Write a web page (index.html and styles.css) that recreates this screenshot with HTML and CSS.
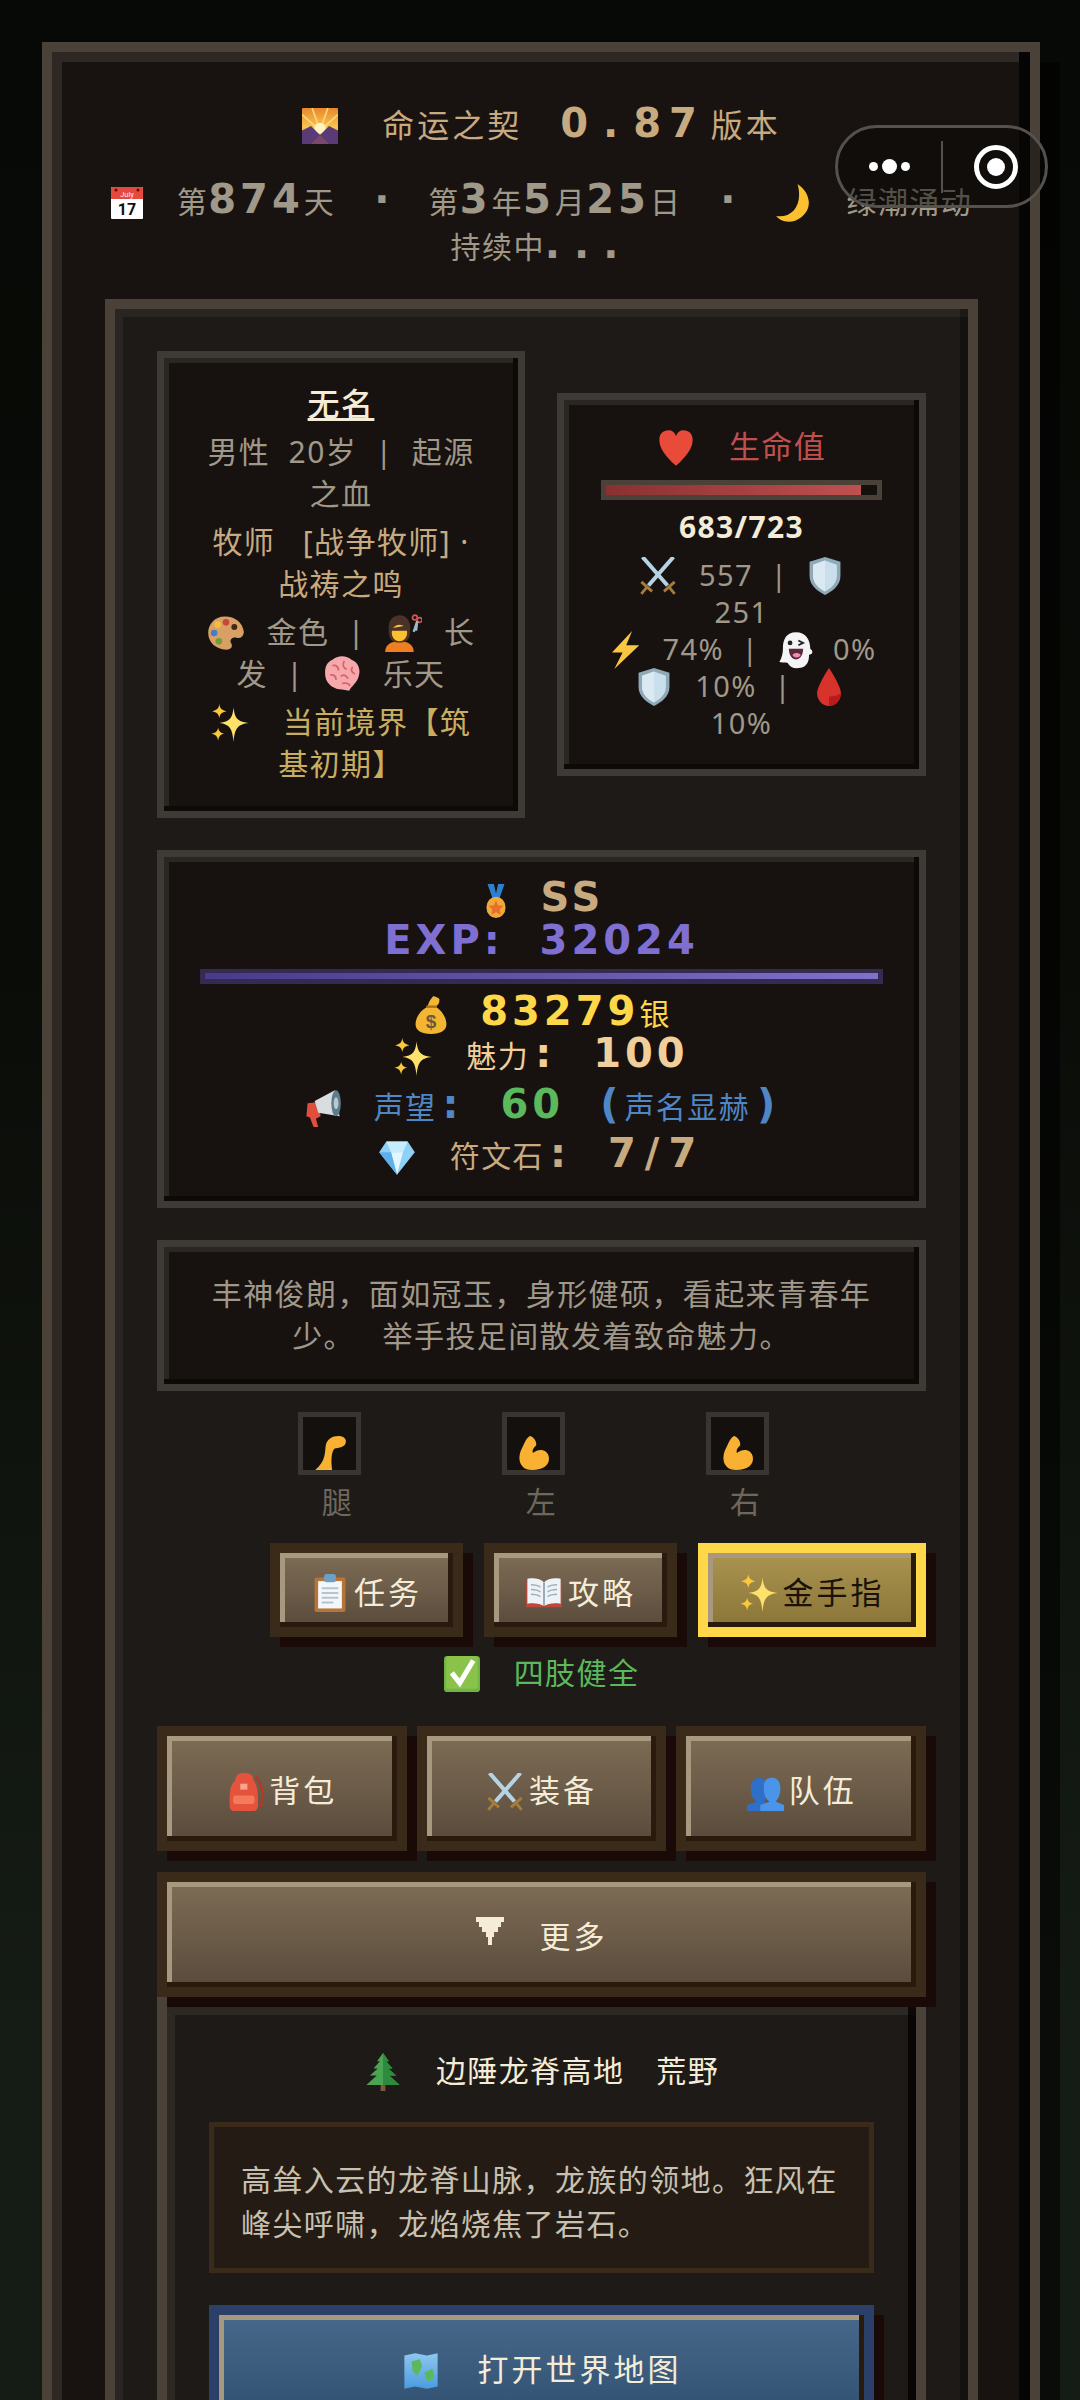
FILE: index.html
```html
<!DOCTYPE html>
<html>
<head>
    <title>命运之契</title>
    <link rel="stylesheet" href="styles.css">
</head>

<body>
<svg class="sprites" xmlns="http://www.w3.org/2000/svg">
    <defs>
        <linearGradient id="skyGrad" x1="0" y1="0" x2="0" y2="1"><stop offset="0" stop-color="#e8862c"/><stop offset=".55" stop-color="#f9c74f"/><stop offset="1" stop-color="#8a4a7a"/></linearGradient>
        <linearGradient id="mapGrad" x1="0" y1="0" x2="0" y2="1"><stop offset="0" stop-color="#8fc7ee"/><stop offset="1" stop-color="#4a9be0"/></linearGradient>
    </defs>
    <symbol id="i-sunrise" viewBox="0 0 32 32"><rect width="32" height="32" rx="1" fill="url(#skyGrad)"/><path d="M16 20L9 0M16 20L23 0M16 20L0 6M16 20L32 6" stroke="#fbd67a" stroke-width="1.5"/><circle cx="16" cy="18" r="5" fill="#fff3c4"/><path d="M0 32V20L8 16L16 24L24 16L32 20V32Z" fill="#5b3a78"/><path d="M8 32L16 24L24 32Z" fill="#7a4a6a"/></symbol>
    <symbol id="i-moon" viewBox="0 0 32 32"><path d="M19 0C31 8 33 24 17 31C10 33 4 31 1 27C14 29 24 18 19 0Z" fill="#fbc02d"/></symbol>
    <symbol id="i-heart" viewBox="0 0 32 32"><path d="M16 31C5 21 2 15 2 9C2 4 5 1 10 1C13 1 15 3 16 6C17 3 19 1 22 1C27 1 30 4 30 9C30 15 27 21 16 31Z" fill="#e84b3a"/></symbol>
    <symbol id="i-swords" viewBox="0 0 32 32"><path d="M29 0L8 24M3 0L24 24" stroke="#b4d4e6" stroke-width="3.4"/><path d="M2 21L11 29M30 21L21 29M7 25L2 31M25 25L30 31" stroke="#a67c3a" stroke-width="2.4"/></symbol>
    <symbol id="i-shield" viewBox="0 0 32 32"><path d="M16 0L29 4V16C29 24 22 29 16 32C10 29 3 24 3 16V4Z" fill="#90a9b7"/><path d="M16 3L26 6.500V16C26 22 21 26.500 16 29C11 26.500 6 22 6 16V6.500Z" fill="#c9e0ec"/><path d="M16 3V29C11 26.500 6 22 6 16V6.500Z" fill="#dbeaf2"/></symbol>
    <symbol id="i-bolt" viewBox="0 0 32 32"><path d="M22 0L5 18H14L7 32L28 12H17Z" fill="#fbc640"/></symbol>
    <symbol id="i-ghost" viewBox="0 0 32 32"><path d="M16 1C8 1 5 7 5 14C5 21 3 24 2 26C6 27 7 26 9 27C11 31 15 32 20 31C25 30 27 26 27 20C30 20 31 17 28 15C28 7 24 1 16 1Z" fill="#f4f4f6"/><circle cx="11" cy="10" r="2" fill="#222"/><path d="M18 8L22 10L18 12" stroke="#222" fill="none" stroke-width="1.5"/><path d="M10 15H22C22 22 18 24 16 24C13 24 10 21 10 15Z" fill="#5a2a3a"/><path d="M13 20C15 18 18 18 20 20C19 23 14 23 13 20Z" fill="#ef8fa8"/></symbol>
    <symbol id="i-drop" viewBox="0 0 32 32"><path d="M16 0C16 0 6 15 6 21A10 11 0 0 0 26 21C26 15 16 0 16 0Z" fill="#d8322c"/><path d="M16 24V32A10 11 0 0 0 26 21C24 23 20 24 16 24Z" fill="#b71c1c"/></symbol>
    <symbol id="i-palette" viewBox="0 0 32 32"><path d="M15 2C6 2 1 9 1 16C1 24 8 30 16 30C21 30 22 27 20 24C19 21 22 19 25 20C29 21 31 18 31 15C30 7 24 2 15 2Z" fill="#d9a066"/><circle cx="9" cy="9" r="2.800" fill="#f2c037"/><circle cx="16" cy="7" r="2.800" fill="#c9463d"/><circle cx="6" cy="16" r="2.800" fill="#3f7fc9"/><circle cx="10" cy="23" r="2.800" fill="#6b9e3f"/><circle cx="23" cy="11" r="2.500" fill="#3f2a1a"/></symbol>
    <symbol id="i-haircut" viewBox="0 0 32 32"><path d="M1 32C1 25 7 23 13 23C19 23 25 25 25 32Z" fill="#ef7d22"/><path d="M4 14C3 5 8 1 13 1C19 1 23 6 22 14C22 20 20 24 13 24C6 24 4 20 4 14Z" fill="#4a3228"/><ellipse cx="13" cy="16" rx="6.500" ry="7" fill="#fbc02d"/><path d="M7 12C10 11 15 11 19 9L20 14L6 14Z" fill="#4a3228"/><circle cx="26" cy="3" r="2" fill="none" stroke="#d9534f" stroke-width="1.400"/><circle cx="30" cy="5" r="2" fill="none" stroke="#d9534f" stroke-width="1.400"/><path d="M25 15L28 6L27 14" stroke="#9fb8c6" stroke-width="2" fill="none"/></symbol>
    <symbol id="i-brain" viewBox="0 0 32 32"><path d="M8 4C12 0 20 0 24 4C30 6 32 13 30 18C29 23 24 26 22 30L16 29C10 29 3 25 2 18C1 11 3 6 8 4Z" fill="#f6a9ad"/><path d="M8 9C11 8 13 10 13 13M18 5C16 8 17 11 20 12M25 10C23 12 24 15 27 16M6 17C9 16 11 18 11 21M15 18C17 16 20 17 21 20M16 24C19 23 22 24 23 26" stroke="#d9626c" stroke-width="1.500" fill="none"/></symbol>
    <symbol id="i-spark" viewBox="0 0 32 32"><path d="M19 3C20 12 22 15 32 16C22 17 20 21 19 32C18 21 16 17 7 16C16 15 18 12 19 3Z" fill="#fde16b"/><path d="M7 0C7.500 4 9 5 13 6C9 7 7.500 8 7 12C6.500 8 5 7 1 6C5 5 6.500 4 7 0Z" fill="#fbc83c"/><path d="M6 20C6.500 23 8 24.500 11 25C8 25.500 6.500 27 6 31C5.500 27 4 25.500 0 25C4 24.500 5.500 23 6 20Z" fill="#fbc83c"/></symbol>
    <symbol id="i-medal" viewBox="0 0 32 32"><path d="M8 0H14L16 9L18 0H24L19 14H13Z" fill="#2f7fd0"/><ellipse cx="16" cy="22" rx="9" ry="10" fill="#f2a93b"/><path d="M16 15L18 20L23 20.500L19.500 24L20.500 29L16 26.500L11.500 29L12.500 24L9 20.500L14 20Z" fill="#e8712c"/></symbol>
    <symbol id="i-horn" viewBox="0 0 32 32"><path d="M3 12L12 11L14 23L10 25L12 32H8L5 24L2 23Z" fill="#e04f3c"/><path d="M9 10L26 1L30 23L12 20Z" fill="#d8dde0"/><ellipse cx="27" cy="12" rx="4" ry="11" fill="#5d7b8a"/><ellipse cx="27" cy="12" rx="2" ry="5" fill="#b8c9d2"/></symbol>
    <symbol id="i-gem" viewBox="0 0 32 32"><path d="M7 3H25L31 12L16 31L1 12Z" fill="#8fd0f7"/><path d="M7 3L11 12H21L25 3Z" fill="#c8ecff"/><path d="M11 12L16 31L21 12Z" fill="#e4f6ff"/><path d="M1 12L11 12L16 31Z" fill="#5fb0ea"/></symbol>
    <symbol id="i-leg" viewBox="0 0 32 32"><path d="M24 0C18 0 13 3 12 9C11 16 12 24 2 32H18C17 24 17 16 20 12C24 11 31 11 31 5C31 2 28 0 24 0Z" fill="#f8b133"/></symbol>
    <symbol id="i-arm" viewBox="0 0 32 32"><path d="M12 0C8 3 7 7 4 13C0 22 3 32 14 32C25 32 31 27 30 20C29 13 21 11 15 16C14 13 16 11 18 9C19 5 15 0 12 0Z" fill="#f8b133"/></symbol>
    <symbol id="i-clip" viewBox="0 0 32 32"><rect x="3" y="3" width="26" height="29" rx="1.500" fill="#b5743a"/><rect x="6" y="6" width="20" height="23" fill="#f4f7fa"/><rect x="11" y="0" width="10" height="7" rx="2" fill="#6f9ec4"/><path d="M9 12H23M9 16H23M9 20H23M9 24H19" stroke="#b6c4ce" stroke-width="1.500"/></symbol>
    <symbol id="i-book" viewBox="0 0 32 32"><path d="M1 6H31V28H1Z" fill="#c0453a"/><path d="M2 4C8 3 13 4 16 7C19 4 24 3 30 4V25C24 24 19 25 16 27C13 25 8 24 2 25Z" fill="#eef2f6"/><path d="M16 7V27" stroke="#8fa3b2" stroke-width="1.500"/><path d="M5 9C8 9 11 9.500 13 11M5 13C8 13 11 13.500 13 15M5 17C8 17 11 17.500 13 19M27 9C24 9 21 9.500 19 11M27 13C24 13 21 13.500 19 15M27 17C24 17 21 17.500 19 19" stroke="#9fb0bd" stroke-width="1.200" fill="none"/></symbol>
    <symbol id="i-check" viewBox="0 0 32 32"><rect width="32" height="32" rx="3" fill="#6fb544"/><rect x="2" y="0" width="28" height="29" rx="2" fill="#8bc34a"/><path d="M7 15L14 24L26 4" stroke="#fff" stroke-width="4.500" fill="none"/></symbol>
    <symbol id="i-pack" viewBox="0 0 32 32"><path d="M8 6C8 1 12 0 15 0C19 0 23 1 23 6C26 9 27 14 27 26C27 30 26 32 23 32H7C4 32 3 30 3 26C3 14 4 9 8 6Z" fill="#e5533d"/><rect x="12" y="9" width="6" height="5" fill="#f9a58a"/><rect x="6" y="19" width="18" height="7" rx="2" fill="#f47a5e"/><path d="M25 3C31 9 32 20 29 29" stroke="#b5382a" stroke-width="2" fill="none"/></symbol>
    <symbol id="i-team" viewBox="0 0 32 32"><path d="M1 32V27L9 24C5 22 4 17 4 12C4 6 9 4 11 4C15 4 18 8 18 14C18 19 16 23 15 24L20 27V32Z" fill="#2f6fc8"/><path d="M12 32V27L20 24C16 22 15 17 15 12C15 6 18 4 22 4C26 4 29 7 29 13C29 18 27 22 25 24L32 27V32Z" fill="#4a94ea"/></symbol>
    <symbol id="i-tree" viewBox="0 0 32 32"><rect x="14" y="27" width="4" height="5" fill="#7a5a40"/><path d="M16 0L21 7H11ZM16 4L24 13H8ZM16 9L27 19H5ZM16 14L30 27H2Z" fill="#4aa552"/><path d="M16 0L21 7H16ZM16 4L24 13H16ZM16 9L27 19H16ZM16 14L30 27H16Z" fill="#2e8a3c"/></symbol>
    <symbol id="i-map" viewBox="0 0 32 32"><path d="M2 3L11 1L21 3L30 1V29L21 31L11 29L2 31Z" fill="url(#mapGrad)"/><path d="M8 8L15 6L17 12L13 20L9 16ZM19 17L26 14L27 22L21 25Z" fill="#5cb85c"/></symbol>
    <symbol id="i-more" viewBox="0 0 28 28"><path d="M0 0H28V5H25V10H22V15H18V20H16V28H12V20H10V15H6V10H3V5H0Z" fill="#f5ecd8"/></symbol>
</svg>

<div class="outer frame">
    <header class="top">
        <div class="title"><svg class="ico"><use href="#i-sunrise"/></svg>命运之契<span class="px ver">0<span class="dot">.</span>87</span>版本</div>
        <div class="date">
            <svg class="ico cal" viewBox="0 0 32 32"><rect width="32" height="32" rx="1" fill="#fff"/><path d="M0 1a1 1 0 0 1 1-1h30a1 1 0 0 1 1 1v11H0Z" fill="#e5483c"/><circle cx="5" cy="3" r="1.5" fill="#5a0f0a"/><circle cx="27" cy="3" r="1.5" fill="#5a0f0a"/><text x="16" y="9.500" font-size="7.500" font-family="Roboto" letter-spacing="0" fill="#ffe9e0" text-anchor="middle">July</text><text x="16" y="28" font-size="16" font-weight="700" font-family="Roboto" letter-spacing="0" fill="#111" text-anchor="middle">17</text></svg>第<span class="px">874</span>天<span class="px sep">·</span>第<span class="px">3</span>年<span class="px">5</span>月<span class="px">25</span>日<span class="px sep">·</span><svg class="ico moon"><use href="#i-moon"/></svg>绿潮涌动<br>持续中<span class="px dots">...</span>
        </div>
    </header>

    <main class="inner frame">
        <div class="top-row">
            <section class="card card-who">
                <div class="name"><u>无名</u></div>
                <p class="grey">男性&nbsp; 20岁 &nbsp;|&nbsp; 起源<br>之血</p>
                <p class="tan">牧师 &nbsp;&nbsp;[战争牧师] ·<br>战祷之鸣</p>
                <p class="grey"><svg class="ico"><use href="#i-palette"/></svg>金色 &nbsp;|&nbsp; <svg class="ico"><use href="#i-haircut"/></svg>长<br>发 &nbsp;|&nbsp; <svg class="ico"><use href="#i-brain"/></svg>乐天</p>
                <p class="gold"><svg class="ico"><use href="#i-spark"/></svg>当前境界【筑<br>基初期】</p>
            </section>
            <section class="card card-hp">
                <div class="hp-title"><svg class="ico"><use href="#i-heart"/></svg>生命值</div>
                <div class="hp-bar"><div class="hp-fill" style="width: 94%"></div></div>
                <div class="hp-val">683/723</div>
                <div class="hp-stats">
                    <svg class="ico"><use href="#i-swords"/></svg>557 &nbsp;|&nbsp; <svg class="ico ico-end"><use href="#i-shield"/></svg><br>251<br>
                    <svg class="ico ico-sm"><use href="#i-bolt"/></svg>74% &nbsp;|&nbsp; <svg class="ico ico-sm"><use href="#i-ghost"/></svg>0%<br>
                    <svg class="ico"><use href="#i-shield"/></svg>10% &nbsp;|&nbsp; <svg class="ico ico-end"><use href="#i-drop"/></svg><br>10%
                </div>
            </section>
        </div>

        <section class="card card-exp">
            <div class="rank"><svg class="ico"><use href="#i-medal"/></svg><span class="px">SS</span></div>
            <div class="exp px">EXP: 32024</div>
            <div class="exp-bar"><div class="exp-fill" style="width: 100%"></div></div>
            <div class="row money"><svg class="ico" viewBox="0 0 32 32"><path d="M18 0C21 1 24 2 23 4C23 7 21 8 20 9C25 12 29 18 29 24C29 29 24 32 16 32C8 32 3 29 3 24C3 18 7 12 13 9C14 6 15 3 18 0Z" fill="#f2b632"/><path d="M12 9L21 9" stroke="#a8701c" stroke-width="2"/><text x="16" y="27" font-size="16" font-weight="700" font-family="Liberation Sans" letter-spacing="0" fill="#6b5a3a" text-anchor="middle">$</text></svg><span class="px">83279</span>银</div>
            <div class="row charm"><svg class="ico"><use href="#i-spark"/></svg>魅力<span class="px colon">:</span><span class="px">100</span></div>
            <div class="row fame"><svg class="ico"><use href="#i-horn"/></svg>声望<span class="px colon">:</span><span class="px fame-num">60</span><span class="px paren">(</span>声名显赫<span class="px paren-end">)</span></div>
            <div class="row rune"><svg class="ico"><use href="#i-gem"/></svg>符文石<span class="px colon">:</span><span class="px rune-num">7/7</span></div>
        </section>

        <section class="card card-desc">丰神俊朗，面如冠玉，身形健硕，看起来青春年<br>少。 &nbsp; 举手投足间散发着致命魅力。</section>

        <div class="limbs">
            <div class="limb"><div class="slot"><svg><use href="#i-leg"/></svg></div><div class="limb-name">腿</div></div>
            <div class="limb"><div class="slot"><svg><use href="#i-arm"/></svg></div><div class="limb-name">左</div></div>
            <div class="limb"><div class="slot"><svg><use href="#i-arm"/></svg></div><div class="limb-name">右</div></div>
        </div>

        <div class="tool-row">
            <button class="btn tool"><svg class="ico-btn"><use href="#i-clip"/></svg>任务</button>
            <button class="btn tool"><svg class="ico-btn"><use href="#i-book"/></svg>攻略</button>
            <button class="btn tool tool-gold"><svg class="ico-btn"><use href="#i-spark"/></svg>金手指</button>
        </div>

        <div class="status"><svg class="ico"><use href="#i-check"/></svg>四肢健全</div>

        <div class="nav-row">
            <button class="btn nav"><svg class="ico-btn"><use href="#i-pack"/></svg>背包</button>
            <button class="btn nav"><svg class="ico-btn"><use href="#i-swords"/></svg>装备</button>
            <button class="btn nav"><svg class="ico-btn"><use href="#i-team"/></svg>队伍</button>
        </div>
        <button class="btn nav more"><svg class="ico-more"><use href="#i-more"/></svg>更多</button>

        <section class="place frame">
            <div class="place-title"><svg class="ico"><use href="#i-tree"/></svg>边陲龙脊高地<span class="place-kind">荒野</span></div>
            <div class="place-desc">高耸入云的龙脊山脉，龙族的领地。狂风在<br>峰尖呼啸，龙焰烧焦了岩石。</div>
            <button class="btn map-btn"><svg class="ico"><use href="#i-map"/></svg>打开世界地图</button>
        </section>
    </main>
</div>

<div class="capsule">
    <div class="capsule-dots"><i></i><i class="big"></i><i></i></div>
    <div class="capsule-line"></div>
    <div class="capsule-target"><i></i></div>
</div>
</body>
</html>
```

FILE: styles.css
```css
* { box-sizing: border-box; }

html, body { margin: 0; height: 2400px; overflow: hidden; }
body {
    background: linear-gradient(180deg, #070906 0%, #0a0c08 40%, #151c15 85%, #151c15 100%);
    font-family: "Noto Sans", "Noto Sans CJK SC", sans-serif;
    font-size: 30px;
    letter-spacing: 1.4px;
    color: #a09888;
    position: relative;
}

p { margin: 0; }
.sprites { width: 0; height: 0; position: absolute; }

/* pixel-ish numbers */
.px {
    font-family: "DejaVu Sans", sans-serif;
    font-weight: 700;
    font-size: 40px;
    letter-spacing: 4px;
    line-height: 1;
}

.ico { width: 38px; height: 38px; vertical-align: middle; margin: -8px 22px -4px 0; }
.ico-sm { margin-right: 18px; }
.ico-end { margin-right: 0; }

.frame {
    border: 10px solid #4a4238;
    box-shadow: inset -10px -10px 0 rgba(0, 0, 0, .75), inset 10px 10px 0 rgba(255, 255, 255, .08);
}

.outer {
    margin: 42px 0 0 42px;
    width: 998px;
    height: 2400px;
    padding: 50px 52px 0 53px;
    background: #181311;
    box-shadow: inset -11px -10px 0 #060505, inset 10px 10px 0 #2e2824, 20px 20px 0 rgba(0, 0, 0, .55);
}

.top { text-align: center; }
.title { color: #c8aa80; font-size: 32px; letter-spacing: 3px; line-height: 46px; }
.title .ico { width: 36px; height: 36px; margin-right: 44px; }
.ver { margin: 0 6px 0 38px; letter-spacing: 8px; }
.ver .dot { margin: 0 7px; }
.date { margin: 31px -30px 0; line-height: 45px; white-space: nowrap; }
.cal { width: 32px; height: 32px; margin-right: 34px; }
.moon { margin-right: 34px; }
.sep { margin: 0 39px; letter-spacing: 0; }
.dots { letter-spacing: 14px; }

.inner {
    margin-top: 30px;
    height: 2200px;
    padding: 42px 42px 0;
    background: #1e1a17;
    box-shadow: inset -8px -8px 0 rgba(0, 0, 0, .3), inset 8px 8px 0 rgba(255, 255, 255, .05);
}

.card {
    border: 7px solid #3e3a36;
    background: #171210;
    box-shadow: inset -5px -5px 0 #0d0906, inset 5px 5px 0 #2a2622;
    text-align: center;
}

.top-row { display: flex; align-items: center; gap: 32px; }

.card-who { width: 368px; height: 467px; padding: 24px 20px 0; line-height: 41.500px; }
.card-who p { margin-top: 7px; }
.card-who p:first-of-type { margin-top: 5px; }
.name { color: #f5ecd8; font-size: 32px; font-weight: 500; line-height: 44px; }
.tan { color: #c8aa80; }
.gold { color: #c9ae62; }
.gold .ico { margin-right: 34px; }

.card-hp { width: 369px; height: 383px; padding: 26px 30px 0; }
.hp-title { color: #c0504d; line-height: 40px; font-size: 31px; }
.hp-title .ico { margin-right: 34px; }
.hp-bar { height: 20px; margin: 14px 7px 0; border: 5px solid #4a4238; background: #14100e; }
.hp-fill { height: 100%; background: linear-gradient(90deg, #8a3030, #c05050); }
.hp-val { color: #f5ecd8; font-weight: 700; line-height: 44px; margin-top: 5px; }
.hp-stats { font-size: 29px; line-height: 37px; margin-top: 7px; }

.card-exp { margin-top: 32px; height: 358px; padding-top: 20px; }
.rank { color: #c8aa80; line-height: 40px; }
.rank .ico { width: 34px; height: 38px; margin-right: 28px; }
.exp { display: block; color: #7f6fd0; line-height: 40px; word-spacing: 18px; }
.exp-bar { height: 15px; margin: 9px 36px 0; padding: 4px 5px; background: #352a52; }
.exp-fill { height: 6px; background: linear-gradient(90deg, #4a3a8a, #8070c8); }
.row { line-height: 46px; }
.money { margin-top: 7px; color: #ffd84a; }
.money .ico { margin-right: 30px; }
.charm { color: #f0cf9a; margin-top: -4px; }
.charm .ico { margin-right: 34px; }
.fame { color: #4f86c6; margin-top: 5px; }
.fame .ico { margin-right: 32px; }
.fame-num { color: #5cb85c; margin-right: 36px; }
.paren { margin-right: 2px; }
.paren-end { margin-left: 7px; }
.rune { color: #c8aa80; margin-top: 3px; }
.rune .ico { margin-right: 34px; }
.rune-num { letter-spacing: 9px; }
.colon { margin: 0 42px 0 6px; letter-spacing: 0; }

.card-desc { margin-top: 32px; height: 151px; padding: 26px 0 0; line-height: 42px; }

.limbs { display: flex; justify-content: center; gap: 125px; margin-top: 21px; }
.limb { width: 79px; }
.slot {
    width: 63px;
    height: 63px;
    border: 5px solid #3a3530;
    background: #14100e;
    display: flex;
    justify-content: center;
    align-items: flex-end;
}
.slot svg { width: 34px; height: 34px; }
.limb-name { text-align: center; color: #6e675c; line-height: 40px; margin-top: 7px; }

.btn {
    display: block;
    border: 10px solid #3a2a1a;
    background: linear-gradient(180deg, #7d6d55, #5a4a3c);
    box-shadow: 10px 10px 0 #190a07, inset -5px -5px 0 #2a1a0e, inset 5px 5px 0 #a89880;
    color: #f5ecd8;
    font-family: inherit;
    font-size: 31px;
    letter-spacing: 3px;
    padding: 0;
}
.ico-btn { width: 38px; height: 38px; vertical-align: middle; margin: -4px 5px 0 0; }

.tool-row { display: flex; justify-content: flex-end; gap: 21px; margin-top: 21px; }
.tool { width: 193px; height: 94px; }
.tool-gold { width: 228px; border-color: #ffd84a; background: linear-gradient(180deg, #ab9450, #8a7538); color: #1a1208; }

.status { text-align: center; color: #5cb85c; line-height: 40px; margin-top: 16px; }
.status .ico { width: 36px; height: 36px; margin-right: 34px; }

.nav-row { display: flex; gap: 10px; margin-top: 33px; }
.nav { flex: 1; height: 125px; }
.more { position: relative; width: 100%; margin-top: 21px; }
.ico-more { width: 28px; height: 28px; vertical-align: middle; margin: -18px 36px 0 0; }

.place {
    height: 600px;
    padding: 42px 42px 0;
    background: #1e1a17;
    box-shadow: inset -8px -8px 0 rgba(0, 0, 0, .75), inset 8px 8px 0 #2c2824;
}
.place-title { text-align: center; color: #f5ecd8; line-height: 44px; }
.place-title .ico { margin-right: 34px; }
.place-kind { margin-left: 32px; }
.place-desc {
    margin-top: 29px;
    height: 151px;
    border: 5px solid #3a2a1a;
    background: #241c14;
    color: #c8c0b0;
    padding: 31px 27px 0;
    line-height: 44px;
}
.map-btn {
    width: 100%;
    height: 125px;
    margin-top: 32px;
    border-color: #2a4068;
    background: linear-gradient(180deg, #47688a, #2f5070);
    font-size: 31px;
}
.map-btn .ico { margin-right: 38px; }

.capsule {
    position: absolute;
    top: 125px;
    left: 835px;
    width: 213px;
    height: 83px;
    border: 3px solid #55524e;
    border-radius: 42px;
    background: rgba(10, 8, 6, .5);
    display: flex;
    align-items: center;
}
.capsule-dots { width: 103px; display: flex; justify-content: center; align-items: center; gap: 4px; }
.capsule-dots i { width: 9px; height: 9px; border-radius: 50%; background: #fff; }
.capsule-dots i.big { width: 15px; height: 15px; }
.capsule-line { width: 2px; height: 52px; background: #55524e; }
.capsule-target {
    width: 44px;
    height: 44px;
    margin-left: 31px;
    border: 5px solid #fff;
    border-radius: 50%;
    display: flex;
    align-items: center;
    justify-content: center;
}
.capsule-target i { width: 18px; height: 18px; border-radius: 50%; background: #fff; }
```
